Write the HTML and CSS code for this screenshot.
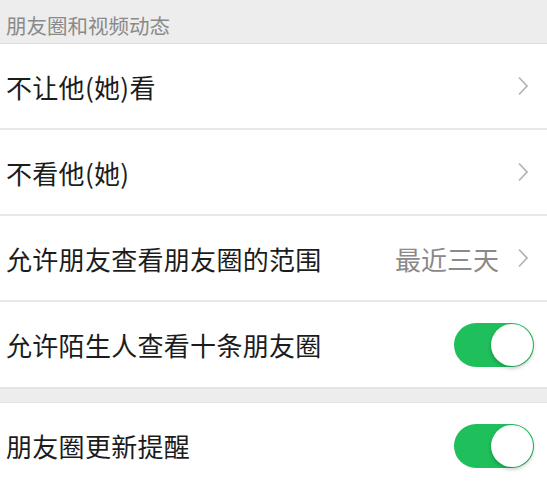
FILE: index.html
```html
<!DOCTYPE html>
<html lang="zh">
<head>
<meta charset="utf-8">
<link rel="stylesheet" href="styles.css">
</head>
<body>
<div class="section-title">朋友圈和视频动态</div>
<div class="group">
  <div class="row">
    <span class="label">不让他(她)看</span>
    <span class="right"><svg class="chev" width="10" height="20" viewBox="0 0 10 20"><path d="M1 1.5 L9 10 L1 18.5" fill="none" stroke="#b5b5b5" stroke-width="1.8"/></svg></span>
  </div>
  <div class="row">
    <span class="label">不看他(她)</span>
    <span class="right"><svg class="chev" width="10" height="20" viewBox="0 0 10 20"><path d="M1 1.5 L9 10 L1 18.5" fill="none" stroke="#b5b5b5" stroke-width="1.8"/></svg></span>
  </div>
  <div class="row">
    <span class="label">允许朋友查看朋友圈的范围</span>
    <span class="right"><span class="value">最近三天</span><svg class="chev" width="10" height="20" viewBox="0 0 10 20"><path d="M1 1.5 L9 10 L1 18.5" fill="none" stroke="#b5b5b5" stroke-width="1.8"/></svg></span>
  </div>
  <div class="row last toggle-row">
    <span class="label">允许陌生人查看十条朋友圈</span>
    <span class="switch"><span class="knob"></span></span>
  </div>
</div>
<div class="gap"></div>
<div class="group">
  <div class="row last toggle-row">
    <span class="label">朋友圈更新提醒</span>
    <span class="switch"><span class="knob"></span></span>
  </div>
</div>
</body>
</html>
```
FILE: styles.css
```css
html, body {
  margin: 0;
  padding: 0;
  background: #ffffff;
  font-family: "Noto Sans CJK SC", "Noto Sans", sans-serif;
}
.section-title {
  height: 43px;
  background: #ededed;
  border-bottom: 1px solid #dcdcdc;
  color: #8a8a8a;
  font-size: 20.5px;
  line-height: 50px;
  padding-left: 6px;
  overflow: hidden;
}
.group {
  background: #fff;
  border-bottom: 2px solid #e4e4e4;
}
.row {
  height: 84px;
  display: flex;
  align-items: center;
  justify-content: space-between;
  border-bottom: 2px solid #e8e8e8;
  padding-left: 6px;
  padding-right: 19px;
}
.row.last {
  border-bottom: none;
  height: 85px;
}
.toggle-row {
  padding-right: 13px;
}
.label {
  font-size: 26px;
  color: #1c1c1c;
  letter-spacing: 0.3px;
}
.right {
  display: flex;
  align-items: center;
}
.value {
  font-size: 26px;
  color: #8a8a8a;
  margin-right: 19px;
}
.chev {
  display: block;
}
.switch {
  position: relative;
  width: 80px;
  height: 44px;
  border-radius: 22px;
  background: #1fc05b;
  display: block;
}
.knob {
  position: absolute;
  right: 1px;
  top: 1px;
  width: 42px;
  height: 42px;
  border-radius: 50%;
  background: #fff;
  box-shadow: 0 2px 4px rgba(0,0,0,0.25);
}
.gap {
  height: 13px;
  background: #ededed;
  border-bottom: 1px solid #e2e2e2;
}
```
